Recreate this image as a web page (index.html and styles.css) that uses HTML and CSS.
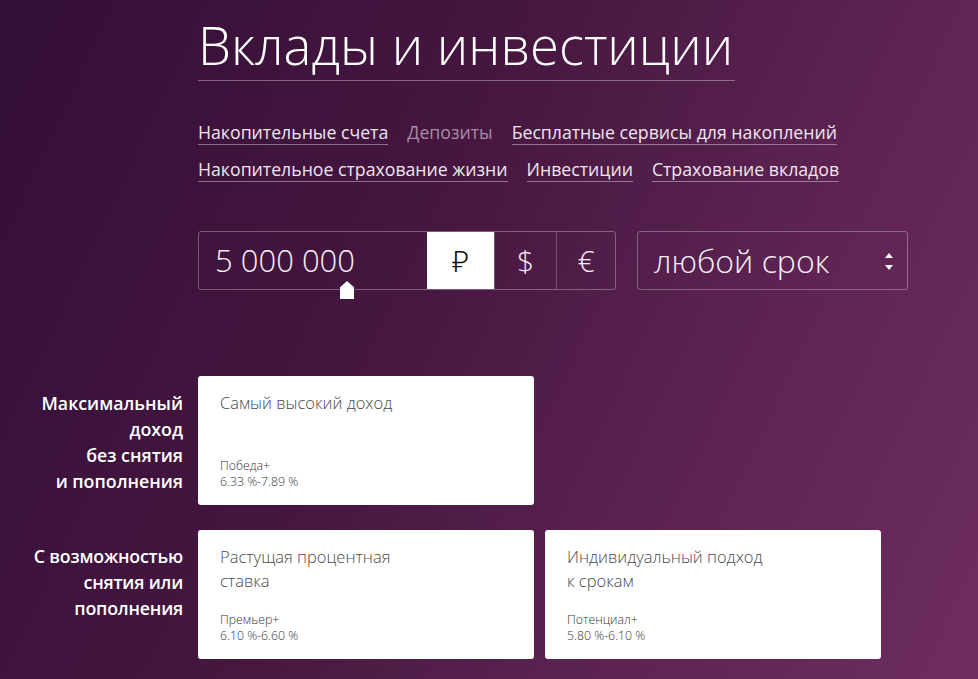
FILE: index.html
```html
<!DOCTYPE html>
<html lang="ru">
<head>
<meta charset="utf-8">
<title>Вклады и инвестиции</title>
<link rel="stylesheet" href="styles.css">
</head>
<body>
<div class="page">
  <header class="head">
    <h1 class="title">Вклады и инвестиции</h1>
    <nav class="nav">
      <div class="nav-row">
        <a class="nav-link" href="#">Накопительные счета</a>
        <span class="nav-link current">Депозиты</span>
        <a class="nav-link" href="#">Бесплатные сервисы для накоплений</a>
      </div>
      <div class="nav-row">
        <a class="nav-link" href="#">Накопительное страхование жизни</a>
        <a class="nav-link" href="#">Инвестиции</a>
        <a class="nav-link" href="#">Страхование вкладов</a>
      </div>
    </nav>
    <div class="controls">
      <div class="amount-box">
        <div class="amount">5 000 000<span class="slider-mark"></span></div>
        <div class="cur active">₽</div>
        <div class="cur">$</div>
        <div class="cur last">€</div>
      </div>
      <div class="term">
        <span>любой срок</span>
        <span class="arrows"><span class="up"></span><span class="down"></span></span>
      </div>
    </div>
  </header>

  <section class="group first">
    <div class="label">Максимальный<br>доход<br>без снятия<br>и пополнения</div>
    <div class="cards">
      <div class="card">
        <div class="card-title">Самый высокий доход</div>
        <div class="card-meta"><div>Победа+</div><div>6.33 %-7.89 %</div></div>
      </div>
    </div>
  </section>

  <section class="group">
    <div class="label narrow">С возможностью<br>снятия или<br>пополнения</div>
    <div class="cards">
      <div class="card">
        <div class="card-title">Растущая процентная<br>ставка</div>
        <div class="card-meta"><div>Премьер+</div><div>6.10 %-6.60 %</div></div>
      </div>
      <div class="card">
        <div class="card-title">Индивидуальный подход<br>к срокам</div>
        <div class="card-meta"><div>Потенциал+</div><div>5.80 %-6.10 %</div></div>
      </div>
    </div>
  </section>
</div>
</body>
</html>
```
FILE: styles.css
```css
html, body {
  margin: 0;
  height: 100%;
}
body {
  background: linear-gradient(115deg, #330f39 0%, #45163f 40%, #5c2352 70%, #6e2d60 100%);
  font-family: "Open Sans", "Noto Sans", sans-serif;
  color: #fff;
  overflow: hidden;
}
.page {
  display: flex;
  flex-direction: column;
  padding-top: 10px;
}
.head {
  margin-left: 198px;
  width: 710px;
}
.title {
  margin: 0;
  display: inline-block;
  font-weight: 300;
  font-size: 52.5px;
  line-height: 70px;
  padding-right: 2px;
  border-bottom: 1px solid rgba(255,255,255,0.35);
}
.nav {
  margin-top: 39px;
  display: flex;
  flex-direction: column;
  gap: 12px;
}
.nav-row {
  display: flex;
  gap: 19px;
}
.nav-link {
  font-size: 17.7px;
  line-height: 24px;
  color: #efe6ee;
  text-decoration: none;
  border-bottom: 1px solid rgba(255,255,255,0.4);
  font-weight: 400;
}
.nav-link.current {
  color: #a98aa6;
  border-bottom-color: transparent;
}
.controls {
  margin-top: 49px;
  display: flex;
  gap: 21px;
}
.amount-box {
  display: flex;
  width: 418px;
  height: 59px;
  box-sizing: border-box;
  border: 1px solid rgba(255,255,255,0.3);
  border-radius: 3px;
}
.amount {
  position: relative;
  width: 228px;
  box-sizing: border-box;
  font-size: 31px;
  font-weight: 300;
  line-height: 57px;
  padding-left: 16px;
  color: #f6eff5;
}
.slider-mark {
  position: absolute;
  left: 141px;
  top: 49px;
  width: 14px;
  height: 18px;
  background: #fff;
  clip-path: polygon(50% 0, 100% 35%, 100% 100%, 0 100%, 0 35%);
}
.cur {
  width: 62px;
  box-sizing: border-box;
  display: flex;
  align-items: center;
  justify-content: center;
  font-size: 30px;
  font-weight: 300;
  color: #f6eff5;
  border-left: 1px solid rgba(255,255,255,0.25);
}
.cur.active {
  width: 67px;
  background: #fff;
  color: #111;
  border-left: none;
}
.cur.last {
  flex: 1;
}
.term {
  width: 271px;
  height: 59px;
  box-sizing: border-box;
  border: 1px solid rgba(255,255,255,0.3);
  border-radius: 3px;
  display: flex;
  align-items: center;
  justify-content: space-between;
  padding: 0 14px 0 16px;
  font-size: 32px;
  font-weight: 300;
  color: #f6eff5;
}
.arrows {
  display: flex;
  flex-direction: column;
  gap: 7px;
  padding-top: 2px;
}
.up, .down {
  width: 0;
  height: 0;
  border-left: 4px solid transparent;
  border-right: 4px solid transparent;
}
.up { border-bottom: 5px solid #fff; }
.down { border-top: 5px solid #fff; }

.group {
  display: grid;
  grid-template-columns: 183px 1fr;
  column-gap: 15px;
  margin-top: 25px;
}
.group.first {
  margin-top: 86px;
}
.label {
  text-align: right;
  font-weight: 600;
  font-size: 17.8px;
  line-height: 26px;
  padding-top: 14px;
  color: #fff;
}
.label.narrow {
  font-weight: 600;
  letter-spacing: -0.2px;
  padding-top: 13px;
}
.cards {
  display: flex;
  gap: 11px;
}
.card {
  width: 336px;
  height: 129px;
  box-sizing: border-box;
  background: #fff;
  border-radius: 3px;
  padding: 15px 22px 15px;
  display: flex;
  flex-direction: column;
  justify-content: space-between;
}
.card-title {
  font-size: 16.5px;
  font-weight: 300;
  line-height: 24px;
  color: #4a4a4a;
}
.card-meta {
  font-size: 12.3px;
  line-height: 16px;
  font-weight: 300;
  color: #333;
}
```
